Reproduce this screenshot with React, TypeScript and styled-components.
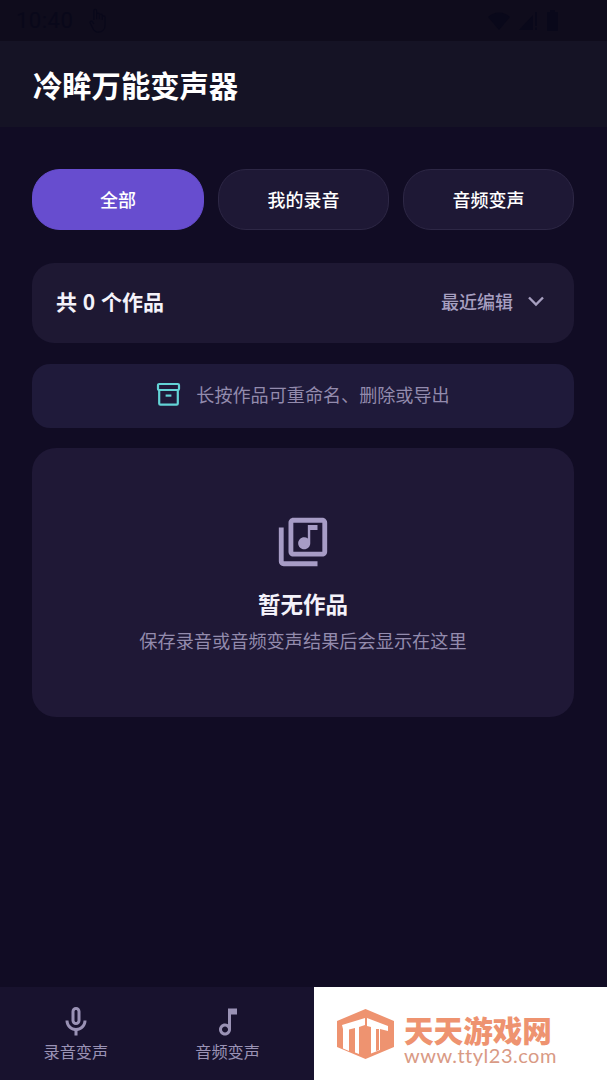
import React from 'react';
import styled, { createGlobalStyle } from 'styled-components';

const cjk = '"Noto Sans CJK SC", "Noto Sans", sans-serif';

const GlobalStyle = createGlobalStyle`
  html, body {
    margin: 0;
    padding: 0;
    background-color: #110c24;
  }
  * {
    box-sizing: border-box;
  }
`;

const Page = styled.div`
  position: relative;
  width: 607px;
  height: 1080px;
  display: flex;
  flex-direction: column;
  overflow: hidden;
  background-color: #110c24;
  font-family: ${cjk};
`;

const StatusBar = styled.div`
  height: 41px;
  padding: 0 49px 0 16px;
  display: flex;
  align-items: center;
  justify-content: space-between;
  background-color: #0f0c1c;
  color: #09081a;
`;

const StatusGroup = styled.div<{ $gap: number }>`
  display: flex;
  align-items: center;
  gap: ${(p) => p.$gap}px;
`;

const Clock = styled.span`
  font-family: Roboto, sans-serif;
  font-size: 22px;
  letter-spacing: 0.5px;
`;

const Header = styled.header`
  height: 86px;
  padding: 0 33px 1px;
  display: flex;
  align-items: center;
  background-color: #151325;
`;

const Title = styled.h1`
  margin: 0;
  color: #fff;
  font-size: 29.3px;
  font-weight: 700;
  line-height: 40px;
`;

const Content = styled.main`
  flex: 1;
  padding: 42px 33px 0 32px;
  display: flex;
  flex-direction: column;
  background-color: #110c24;
`;

const Tabs = styled.div`
  display: grid;
  grid-template-columns: 172px 1fr 1fr;
  gap: 14px;
  margin-bottom: 33px;
`;

const Tab = styled.button<{ $active?: boolean }>`
  height: 61px;
  padding: 0 0 2px;
  border-radius: 28px;
  border: 1px solid ${(p) => (p.$active ? '#674dcf' : '#2d2745')};
  background-color: ${(p) => (p.$active ? '#674dcf' : '#1e1835')};
  color: #fff;
  font-family: ${cjk};
  font-size: 18px;
  font-weight: 500;
`;

const SortCard = styled.div`
  height: 80px;
  padding: 0 29px 4px 24px;
  margin-bottom: 21px;
  display: flex;
  align-items: center;
  justify-content: space-between;
  border-radius: 22px;
  background-color: #1e1833;
`;

const Count = styled.span`
  color: #f4f2fa;
  font-size: 21px;
  font-weight: 700;
  word-spacing: 1px;
`;

const SortButton = styled.div`
  display: flex;
  align-items: center;
  gap: 14px;
  color: #a79fc0;
  font-size: 18px;
  font-weight: 500;
`;

const HintCard = styled.div`
  height: 64px;
  padding-bottom: 4px;
  margin-bottom: 20px;
  display: flex;
  align-items: center;
  justify-content: center;
  gap: 15px;
  border-radius: 18px;
  background-color: #1f1a3a;
  color: #938bad;
  font-size: 18.1px;
`;

const EmptyCard = styled.section`
  height: 269px;
  padding-top: 65px;
  display: flex;
  flex-direction: column;
  align-items: center;
  border-radius: 24px;
  background-color: #1f1836;
`;

const EmptyTitle = styled.div`
  margin-top: 16px;
  color: #f4f2fa;
  font-size: 22.5px;
  font-weight: 700;
  line-height: 32px;
`;

const EmptyText = styled.div`
  margin-top: 8px;
  color: #938bad;
  font-size: 18.2px;
  line-height: 26px;
`;

const BottomNav = styled.nav`
  height: 93px;
  display: grid;
  grid-template-columns: repeat(4, 1fr);
  background-color: #18122e;
`;

const NavItem = styled.div`
  padding-top: 17px;
  display: flex;
  flex-direction: column;
  align-items: center;
  color: #9a92b5;
  font-size: 16.2px;
  line-height: 22px;
`;

const Watermark = styled.div`
  position: absolute;
  left: 314px;
  bottom: 0;
  width: 293px;
  height: 93px;
  padding-left: 23px;
  display: flex;
  align-items: center;
  gap: 10px;
  background-color: #fff;
`;

const BrandText = styled.div`
  padding-top: 13px;
  display: flex;
  flex-direction: column;
`;

const BrandName = styled.div`
  color: #ee9370;
  font-size: 29.6px;
  font-weight: 900;
  line-height: 30px;
`;

const BrandUrl = styled.div`
  color: #d99a85;
  font-family: Lato, sans-serif;
  font-size: 20px;
  font-weight: 400;
  line-height: 20px;
  letter-spacing: 0.5px;
`;

const MicIcon = () => (
  <svg width="36" height="36" viewBox="0 0 24 24" fill="currentColor">
    <path d="M12 14c1.66 0 3-1.34 3-3V5c0-1.66-1.34-3-3-3S9 3.34 9 5v6c0 1.66 1.34 3 3 3zm-1-9c0-.55.45-1 1-1s1 .45 1 1v6c0 .55-.45 1-1 1s-1-.45-1-1V5z" />
    <path d="M17 11c0 2.76-2.24 5-5 5s-5-2.24-5-5H5c0 3.53 2.61 6.43 6 6.92V21h2v-3.08c3.39-.49 6-3.39 6-6.92h-2z" />
  </svg>
);

const NoteIcon = () => (
  <svg width="36" height="36" viewBox="0 0 24 24" fill="currentColor">
    <path d="M12 3l.01 10.55c-.59-.34-1.27-.55-2-.55C7.79 13 6 14.79 6 17s1.79 4 4 4 4-1.79 4-4V7h4V3h-6zm-1.99 16c-1.1 0-2-.9-2-2s.9-2 2-2 2 .9 2 2-.9 2-2 2z" />
  </svg>
);

const LibraryIcon = () => (
  <svg width="58" height="58" viewBox="0 0 24 24" fill="#a79cc6">
    <path d="M20 2H8c-1.1 0-2 .9-2 2v12c0 1.1.9 2 2 2h12c1.1 0 2-.9 2-2V4c0-1.1-.9-2-2-2zm0 14H8V4h12v12zm-7.5-1c1.38 0 2.5-1.12 2.5-2.5V7h3V5h-4v5.51c-.42-.32-.93-.51-1.5-.51-1.38 0-2.5 1.12-2.5 2.5s1.12 2.5 2.5 2.5zM4 6H2v14c0 1.1.9 2 2 2h14v-2H4V6z" />
  </svg>
);

const ArchiveIcon = () => (
  <svg width="25" height="25" viewBox="0 0 25 25" fill="none" stroke="#63d3d6" strokeWidth="2.2">
    <rect x="2" y="2" width="21" height="6" rx="1.2" />
    <path d="M3.2 8v13.4c0 .7.5 1.2 1.2 1.2h16.2c.7 0 1.2-.5 1.2-1.2V8" />
    <path d="M9.6 13.6h5.8" />
  </svg>
);

const ChevronIcon = () => (
  <svg width="18" height="12" viewBox="0 0 18 12" fill="none" stroke="#a79fc0" strokeWidth="2.4">
    <path d="M2 2.5l7 7 7-7" />
  </svg>
);

const HandIcon = () => (
  <svg width="19" height="28" viewBox="0 0 20 30" fill="none" stroke="currentColor" strokeWidth="1.3">
    <path d="M5 14V4c0-2 3-2 3 0v9M8 8c0-2 3-2 3 0v5M11 9c0-2 3-2 3 0v5M14 11c0-2 3-2 3 0v8c0 5-3 8-7 8-3 0-5-2-6-4l-3-6c-.6-1.6 1.4-2.6 2.4-1.4L5 18" />
  </svg>
);

const StatusIcons = () => (
  <StatusGroup $gap={9}>
    <svg width="22" height="18" viewBox="0 0 22 18" fill="currentColor">
      <path d="M0 5c6-6 16-6 22 0L11 18z" />
    </svg>
    <svg width="19" height="19" viewBox="0 0 19 19" fill="currentColor">
      <path d="M14 4v15H0zM16 1h2v14h-2zM16 16.5h2V19h-2z" />
    </svg>
    <svg width="11" height="21" viewBox="0 0 11 21" fill="currentColor">
      <path d="M3 0h5v2h2a1 1 0 011 1v17a1 1 0 01-1 1H1a1 1 0 01-1-1V3a1 1 0 011-1h2z" />
    </svg>
  </StatusGroup>
);

const LogoMark = () => (
  <svg width="57" height="50" viewBox="0 0 57 50">
    <path d="M28.5 0L57 12v26L28.5 50 0 38V12z" fill="#ee9370" />
    <path d="M5 16L28 9v7l-6 2v27l-4-1.5V19l-6 1.5V42l-6-2.5V20z" fill="#fff" />
    <path d="M30 9l21 8v5l-8-2v21l-9 3.5V18l-4-1z" fill="#fff" />
    <path d="M39 20h3v21l-3 1z" fill="#ee9370" />
  </svg>
);

const tabs = ['全部', '我的录音', '音频变声'];

const App = () => {
  return (
    <Page>
      <GlobalStyle />
      <StatusBar>
        <StatusGroup $gap={16}>
          <Clock>10:40</Clock>
          <HandIcon />
        </StatusGroup>
        <StatusIcons />
      </StatusBar>
      <Header>
        <Title>冷眸万能变声器</Title>
      </Header>
      <Content>
        <Tabs>
          {tabs.map((tab, index) => (
            <Tab key={tab} $active={index === 0}>
              {tab}
            </Tab>
          ))}
        </Tabs>
        <SortCard>
          <Count>共 0 个作品</Count>
          <SortButton>
            最近编辑
            <ChevronIcon />
          </SortButton>
        </SortCard>
        <HintCard>
          <ArchiveIcon />
          长按作品可重命名、删除或导出
        </HintCard>
        <EmptyCard>
          <LibraryIcon />
          <EmptyTitle>暂无作品</EmptyTitle>
          <EmptyText>保存录音或音频变声结果后会显示在这里</EmptyText>
        </EmptyCard>
      </Content>
      <BottomNav>
        <NavItem>
          <MicIcon />
          录音变声
        </NavItem>
        <NavItem>
          <NoteIcon />
          音频变声
        </NavItem>
      </BottomNav>
      <Watermark>
        <LogoMark />
        <BrandText>
          <BrandName>天天游戏网</BrandName>
          <BrandUrl>www.ttyl23.com</BrandUrl>
        </BrandText>
      </Watermark>
    </Page>
  );
};

export default App;
